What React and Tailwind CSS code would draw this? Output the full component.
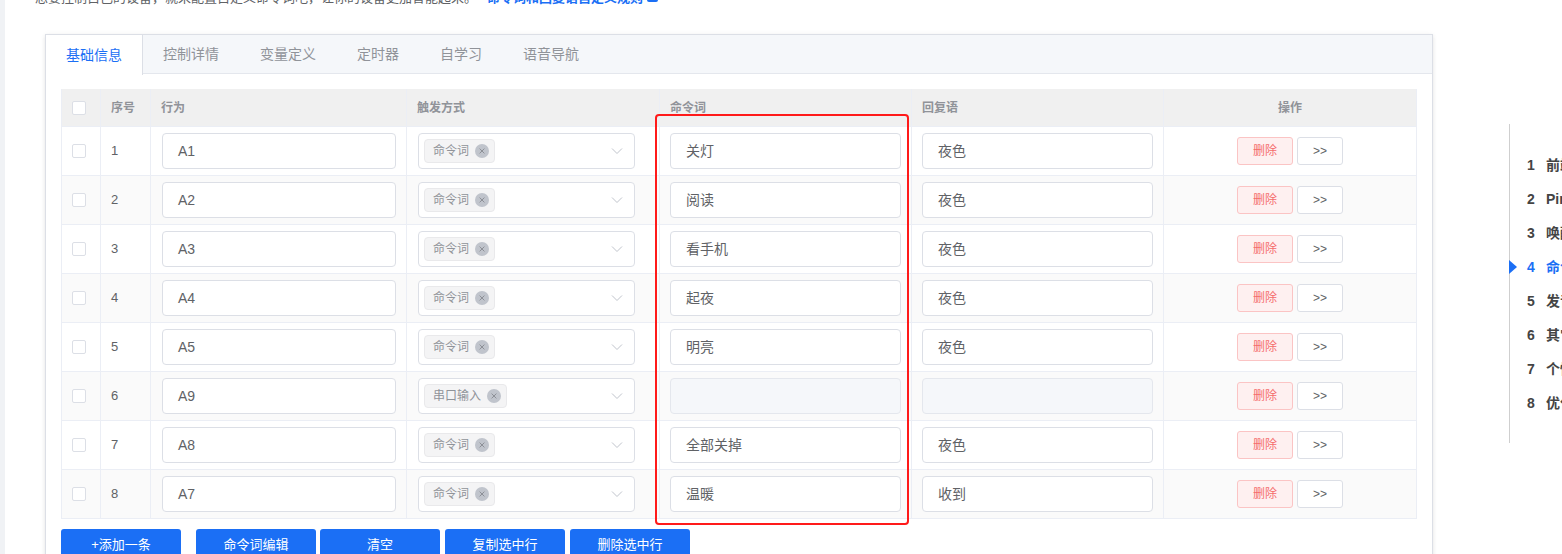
import { useState } from 'react'

const rows = [
  { id: 1, act: 'A1', trig: '命令词', cmd: '关灯', reply: '夜色' },
  { id: 2, act: 'A2', trig: '命令词', cmd: '阅读', reply: '夜色' },
  { id: 3, act: 'A3', trig: '命令词', cmd: '看手机', reply: '夜色' },
  { id: 4, act: 'A4', trig: '命令词', cmd: '起夜', reply: '夜色' },
  { id: 5, act: 'A5', trig: '命令词', cmd: '明亮', reply: '夜色' },
  { id: 6, act: 'A9', trig: '串口输入', cmd: null, reply: null },
  { id: 7, act: 'A8', trig: '命令词', cmd: '全部关掉', reply: '夜色' },
  { id: 8, act: 'A7', trig: '命令词', cmd: '温暖', reply: '收到' },
]

const tabs = ['基础信息', '控制详情', '变量定义', '定时器', '自学习', '语音导航']

const nav = ['前端配置', 'Pin脚配置', '唤醒词配置', '命令词自定义', '发音人配置', '其它配置', '个性化配置', '优化配置']

const grid = 'grid grid-cols-[39px_50px_256px_253px_252px_252px_252px]'

function TextInput({ value }) {
  if (value === null) {
    return <div className="h-[36px] w-full rounded-[4px] border border-[#e4e7ed] bg-[#f5f7fa]" />
  }
  return (
    <div className="flex h-[36px] w-full items-center rounded-[4px] border border-[#dcdfe6] bg-white pl-[15px] text-[14px] text-[#606266]">
      {value}
    </div>
  )
}

function Select({ tag }) {
  return (
    <div className="flex h-[36px] w-[217px] items-center justify-between rounded-[4px] border border-[#dcdfe6] bg-white pl-[5px] pr-[11px]">
      <span className="flex h-[24px] items-center gap-[6px] rounded-[4px] border border-[#e9e9eb] bg-[#f4f4f5] pl-[8px] pr-[5px] text-[12px] text-[#909399]">
        {tag}
        <svg width="14" height="14" viewBox="0 0 14 14">
          <circle cx="7" cy="7" r="7" fill="#c0c4cc" />
          <path d="M4.6 4.6l4.8 4.8M9.4 4.6l-4.8 4.8" stroke="#8d9097" strokeWidth="1" />
        </svg>
      </span>
      <svg width="12" height="8" viewBox="0 0 12 8">
        <path d="M1 1.5l5 5 5-5" fill="none" stroke="#c0c4cc" strokeWidth="1" />
      </svg>
    </div>
  )
}

function Checkbox() {
  return <span className="block h-[14px] w-[14px] rounded-[2px] border border-[#dcdfe6] bg-white" />
}

export default function App() {
  const [active] = useState(0)

  return (
    <div className="flex h-[554px] w-[1562px] overflow-hidden bg-white font-['Liberation_Sans','Noto_Sans_CJK_SC',sans-serif]">
      <div className="w-[5px] flex-none bg-[#f0f2f5]" />

      <div className="w-[1504px] flex-none">
        <div className="-mt-[12px] h-[20px] pl-[30px] text-[13px] leading-[20px] text-[#606266] whitespace-nowrap">
          想要控制自己的设备，就来配置自定义命令词吧，让你的设备更加智能起来。
          <span className="ml-[10px] font-semibold text-[#1b6ff5]">命令词和回复语自定义规则</span>
          <span className="ml-[4px] inline-block h-[10px] w-[11px] rounded-[2px] bg-[#1b6ff5]" />
        </div>

        <div className="ml-[40px] mt-[26px] w-[1388px] border border-[#dcdfe6] bg-white shadow-[0_2px_4px_rgba(0,0,0,0.08),0_0_6px_rgba(0,0,0,0.04)]">
          <div className="flex h-[39px] border-b border-[#e4e7ed] bg-[#f5f7fa]">
            {tabs.map((t, i) => (
              <div
                key={t}
                className={
                  i === active
                    ? '-mb-px flex h-[40px] items-center border-r border-[#dcdfe6] bg-white px-[20px] text-[14px] text-[#1b6ff5]'
                    : 'flex h-[39px] items-center border-r border-transparent px-[20px] text-[14px] text-[#909399]'
                }
              >
                {t}
              </div>
            ))}
          </div>

          <div className="px-[15px] pt-[15px] pb-[20px]">
            <div className="relative border-x border-[#ebeef5]">
              <div className={`${grid} h-[38px] border-b border-[#ebeef5] bg-[#f0f0f0] text-[12px] font-bold text-[#909399]`}>
                <div className="flex items-center border-r border-[#ebeef5] pl-[10px]"><Checkbox /></div>
                <div className="flex items-center border-r border-[#ebeef5] pl-[10px]">序号</div>
                <div className="flex items-center border-r border-[#ebeef5] pl-[10px]">行为</div>
                <div className="flex items-center border-r border-[#ebeef5] pl-[10px]">触发方式</div>
                <div className="flex items-center border-r border-[#ebeef5] pl-[10px]">命令词</div>
                <div className="flex items-center border-r border-[#ebeef5] pl-[10px]">回复语</div>
                <div className="flex items-center justify-center">操作</div>
              </div>

              {rows.map((r, i) => (
                <div
                  key={r.id}
                  className={`${grid} h-[49px] border-b border-[#ebeef5] ${i % 2 === 1 ? 'bg-[#fafafa]' : 'bg-white'}`}
                >
                  <div className="flex items-center border-r border-[#ebeef5] pl-[10px]"><Checkbox /></div>
                  <div className="flex items-center border-r border-[#ebeef5] pl-[10px] text-[13px] text-[#606266]">{r.id}</div>
                  <div className="flex items-center border-r border-[#ebeef5] pl-[11px] pr-[10px]"><TextInput value={r.act} /></div>
                  <div className="flex items-center border-r border-[#ebeef5] pl-[11px]"><Select tag={r.trig} /></div>
                  <div className="flex items-center border-r border-[#ebeef5] px-[10px]"><TextInput value={r.cmd} /></div>
                  <div className="flex items-center border-r border-[#ebeef5] px-[10px]"><TextInput value={r.reply} /></div>
                  <div className="flex items-center justify-center gap-[4px]">
                    <button className="h-[28px] w-[56px] rounded-[3px] border border-[#fbc4c4] bg-[#fef0f0] text-[12px] text-[#f56c6c]">删除</button>
                    <button className="h-[28px] w-[46px] rounded-[3px] border border-[#dcdfe6] bg-white text-[12px] text-[#606266]">&gt;&gt;</button>
                  </div>
                </div>
              ))}

              <div className="pointer-events-none absolute left-[593px] top-[25px] h-[411px] w-[254px] rounded-[4px] border-2 border-[#ff1a1a]" />
            </div>

            <div className="mt-[10px] flex text-[13px] text-white">
              <button className="h-[32px] w-[120px] rounded-[3px] bg-[#1b6ff5]">+添加一条</button>
              <button className="ml-[15px] h-[32px] w-[120px] rounded-[3px] bg-[#1b6ff5]">命令词编辑</button>
              <button className="ml-[4px] h-[32px] w-[120px] rounded-[3px] bg-[#1b6ff5]">清空</button>
              <button className="ml-[5px] h-[32px] w-[120px] rounded-[3px] bg-[#1b6ff5]">复制选中行</button>
              <button className="ml-[5px] h-[32px] w-[120px] rounded-[3px] bg-[#1b6ff5]">删除选中行</button>
            </div>
          </div>
        </div>
      </div>

      <div className="mt-[124px] h-[319px] w-[200px] flex-none border-l border-[#cfcfcf] pt-[24px]">
        {nav.map((n, i) => (
          <div key={n} className="relative flex h-[34px] items-center whitespace-nowrap pl-[17px] text-[14px] font-semibold">
            {i === 3 && (
              <span className="absolute -left-px top-[10px] h-0 w-0 border-y-[7px] border-l-[8px] border-y-transparent border-l-[#1b6ff5]" />
            )}
            <span className={i === 3 ? 'w-[19px] text-[#1b6ff5]' : 'w-[19px] text-[#444]'}>{i + 1}</span>
            <span className={i === 3 ? 'text-[#1b6ff5]' : 'text-[#444]'}>{n}</span>
          </div>
        ))}
      </div>
    </div>
  )
}
